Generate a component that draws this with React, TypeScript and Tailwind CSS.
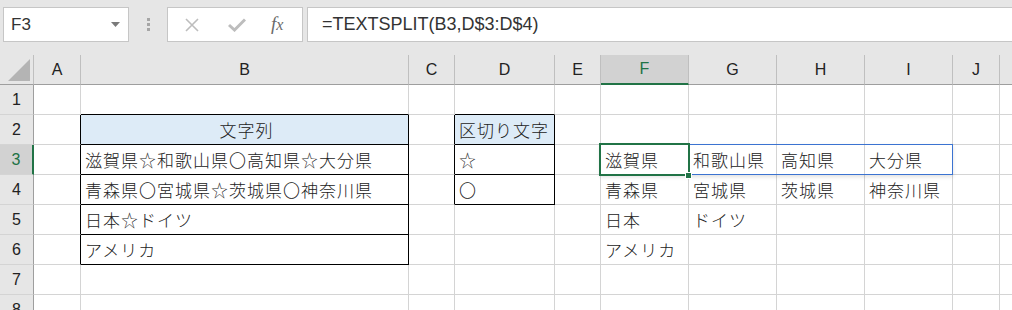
import React from "react";

const colW = [34, 47, 328, 46, 100, 46, 88, 88, 88, 88, 47];
const colNames = ["A", "B", "C", "D", "E", "F", "G", "H", "I", "J"];

type Cell = { t?: string; bg?: string; center?: boolean };

const data: Record<string, Cell> = {
  "2B": { t: "文字列", bg: "bg-[#ddebf7]", center: true },
  "3B": { t: "滋賀県☆和歌山県〇高知県☆大分県" },
  "4B": { t: "青森県〇宮城県☆茨城県〇神奈川県" },
  "5B": { t: "日本☆ドイツ" },
  "6B": { t: "アメリカ" },
  "2D": { t: "区切り文字", bg: "bg-[#ddebf7]" },
  "3D": { t: "☆" },
  "4D": { t: "〇" },
  "3F": { t: "滋賀県" },
  "3G": { t: "和歌山県" },
  "3H": { t: "高知県" },
  "3I": { t: "大分県" },
  "4F": { t: "青森県" },
  "4G": { t: "宮城県" },
  "4H": { t: "茨城県" },
  "4I": { t: "神奈川県" },
  "5F": { t: "日本" },
  "5G": { t: "ドイツ" },
  "6F": { t: "アメリカ" },
};

function inTable(r: number, c: string) {
  if (c === "B" && r >= 2 && r <= 6) return true;
  if (c === "D" && r >= 2 && r <= 4) return true;
  return false;
}

function cellBorder(r: number, c: string) {
  const ci = colNames.indexOf(c);
  const next = colNames[ci + 1];
  const rightBlack = inTable(r, c) || (next ? inTable(r, next) : false);
  const bottomBlack = inTable(r, c) || inTable(r + 1, c);
  return `${rightBlack ? "border-r-black" : "border-r-[#d4d4d4]"} ${
    bottomBlack ? "border-b-black" : "border-b-[#d4d4d4]"
  }`;
}

const cjk = { fontFamily: '"Noto Sans CJK JP", "Noto Sans", sans-serif' };
const latin = { fontFamily: '"Liberation Sans", Arial, sans-serif' };

function Row({ r }: { r: number }) {
  const sel = r === 3;
  return (
    <div className="flex h-[30px]">
      <div
        className={`flex w-[34px] shrink-0 items-center justify-center border-b border-b-[#d4d4d4] text-[16px] ${
          sel
            ? "border-r-2 border-r-[#217346] bg-[#d2d2d2] text-[#217346]"
            : "border-r border-r-[#9e9e9e] bg-[#e6e6e6] text-[#222]"
        }`}
        style={latin}
      >
        {r}
      </div>
      {colNames.map((c, i) => {
        const d = data[`${r}${c}`];
        return (
          <div
            key={c}
            className={`flex shrink-0 items-center overflow-visible whitespace-nowrap border-r border-b pl-[4px] text-[17px] font-light tracking-[1px] text-[#222] ${cellBorder(
              r,
              c
            )} ${d?.bg ?? "bg-white"} ${d?.center ? "justify-center" : ""}`}
            style={{ width: colW[i + 1], ...cjk }}
          >
            {d?.t}
          </div>
        );
      })}
      <div className="flex-1 border-b border-b-[#d4d4d4] bg-white" />
    </div>
  );
}

export default function App() {
  return (
    <div className="relative h-[310px] w-[1012px] overflow-hidden bg-white">
      {/* toolbar */}
      <div className="flex h-[55px] items-start bg-[#e6e6e6] pt-[7px]">
        <div className="ml-[3px] flex h-[35px] w-[126px] items-center justify-between border border-[#c6c6c6] bg-white pl-[7px] pr-[8px]">
          <span className="text-[17px] text-[#333]" style={latin}>
            F3
          </span>
          <svg width="9" height="5" viewBox="0 0 9 5">
            <path d="M0 0 H9 L4.5 5 Z" fill="#7a7a7a" />
          </svg>
        </div>
        <div className="flex w-[38px] flex-col items-center gap-[2px] pt-[11px]">
          <div className="h-[3px] w-[3px] bg-[#a6a6a6]" />
          <div className="h-[3px] w-[3px] bg-[#a6a6a6]" />
          <div className="h-[3px] w-[3px] bg-[#a6a6a6]" />
        </div>
        <div className="flex h-[35px] w-[136px] items-center border border-[#c6c6c6] bg-white">
          <svg className="ml-[16px]" width="16" height="16" viewBox="0 0 16 16">
            <path d="M2 2 L14 14 M14 2 L2 14" stroke="#bdbdbd" strokeWidth="1.6" />
          </svg>
          <svg className="ml-[28px]" width="18" height="14" viewBox="0 0 18 14">
            <path d="M1 7 L6.5 12 L17 1.5" stroke="#bdbdbd" strokeWidth="3" fill="none" />
          </svg>
          <span
            className="ml-[25px] text-[19px] italic text-[#6a6a6a]"
            style={{ fontFamily: '"Liberation Serif", "DejaVu Serif", serif' }}
          >
            f<span className="text-[16px]">x</span>
          </span>
        </div>
        <div className="ml-[4px] flex h-[35px] flex-1 items-center border border-r-0 border-[#c6c6c6] bg-white pl-[14px]">
          <span className="text-[18px] text-[#333]" style={latin}>
            =TEXTSPLIT(B3,D$3:D$4)
          </span>
        </div>
      </div>

      {/* column headers */}
      <div className="flex h-[30px] bg-[#e6e6e6]">
        <div className="relative w-[34px] shrink-0 border-r border-b border-r-[#bfbfbf] border-b-[#9e9e9e]">
          <svg className="absolute left-[8px] top-[4px]" width="22" height="22" viewBox="0 0 22 22">
            <path d="M22 0 L22 22 L0 22 Z" fill="#b4b4b4" />
          </svg>
        </div>
        {colNames.map((c, i) => {
          const sel = c === "F";
          return (
            <div
              key={c}
              className={`flex shrink-0 items-center justify-center border-r border-r-[#bfbfbf] text-[16px] ${
                sel
                  ? "border-b-2 border-b-[#217346] bg-[#d2d2d2] text-[#217346]"
                  : "border-b border-b-[#9e9e9e] text-[#222]"
              }`}
              style={{ width: colW[i + 1], ...latin }}
            >
              {c}
            </div>
          );
        })}
        <div className="flex-1 border-b border-b-[#9e9e9e]" />
      </div>

      {/* rows */}
      {[1, 2, 3, 4, 5, 6, 7, 8].map((r) => (
        <Row key={r} r={r} />
      ))}

      {/* spill range outline */}
      <div className="pointer-events-none absolute left-[600px] top-[144px] h-[31px] w-[353px] border border-[#3b73d1] shadow-[0_2px_4px_rgba(0,0,0,0.12)]" />
      {/* active cell */}
      <div className="pointer-events-none absolute left-[599px] top-[143px] h-[33px] w-[91px] border-2 border-[#217346]" />
      <div className="pointer-events-none absolute left-[685px] top-[172px] h-[7px] w-[7px] border border-white bg-[#217346]" />
    </div>
  );
}
